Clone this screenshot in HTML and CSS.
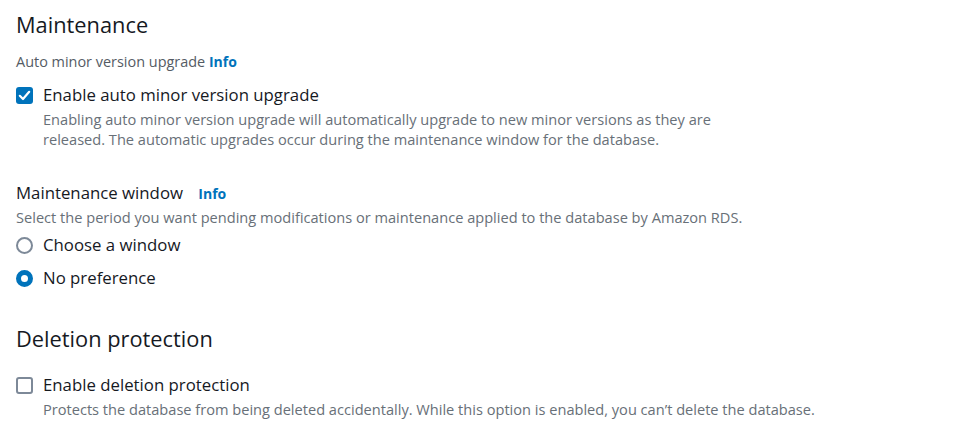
FILE: index.html
```html
<!DOCTYPE html>
<html>
<head>
<meta charset="utf-8">
<link rel="stylesheet" href="styles.css">
</head>
<body>
<div class="page">
  <section class="section">
    <h2 class="heading">Maintenance</h2>
    <div class="field-label">Auto minor version upgrade <a class="info">Info</a></div>
    <div class="option">
      <span class="checkbox checked">
        <svg viewBox="0 0 17 17" width="17" height="17"><rect x="0" y="0" width="17" height="17" rx="3" fill="#0073bb"/><path d="M3.8 8.8 L7 12 L13.2 4.8" fill="none" stroke="#fff" stroke-width="2.2" stroke-linecap="round" stroke-linejoin="round"/></svg>
      </span>
      <div class="option-body">
        <div class="option-label">Enable auto minor version upgrade</div>
        <div class="desc option-desc wrap">Enabling auto minor version upgrade will automatically upgrade to new minor versions as they are released. The automatic upgrades occur during the maintenance window for the database.</div>
      </div>
    </div>

    <div class="field-title">Maintenance window <a class="info info-gap">Info</a></div>
    <div class="desc field-desc">Select the period you want pending modifications or maintenance applied to the database by Amazon RDS.</div>
    <div class="radio-list">
      <div class="radio-row">
        <span class="radio"></span>
        <span class="option-label">Choose a window</span>
      </div>
      <div class="radio-row">
        <span class="radio checked"></span>
        <span class="option-label">No preference</span>
      </div>
    </div>
  </section>

  <section class="section second">
    <h2 class="heading">Deletion protection</h2>
    <div class="option">
      <span class="checkbox"></span>
      <div class="option-body">
        <div class="option-label">Enable deletion protection</div>
        <div class="desc option-desc">Protects the database from being deleted accidentally. While this option is enabled, you can’t delete the database.</div>
      </div>
    </div>
  </section>
</div>
</body>
</html>
```
FILE: styles.css
```css
html, body {
  margin: 0;
  padding: 0;
  background: #ffffff;
}
body {
  font-family: "Open Sans", "Noto Sans", sans-serif;
  color: #16191f;
}
.page {
  padding: 10px 16px 0 16px;
}
.heading {
  margin: 0;
  font-size: 21.8px;
  font-weight: 400;
  line-height: 30px;
  color: #16191f;
}
.field-label {
  margin-top: 12px;
  font-size: 14.45px;
  line-height: 20px;
  color: #545b64;
}
.info {
  color: #0073bb;
  font-weight: 700;
  font-size: 14px;
  text-decoration: none;
}
.info-gap {
  margin-left: 11px;
}
.option {
  display: flex;
  gap: 10px;
  margin-top: 12px;
}
.checkbox {
  flex: none;
  width: 17px;
  height: 17px;
  margin-top: 2.5px;
  box-sizing: border-box;
  border: 2px solid #7d8998;
  border-radius: 3px;
  display: block;
}
.checkbox.checked {
  border: none;
}
.checkbox svg { display: block; }
.option-label {
  font-size: 16.8px;
  line-height: 22px;
  color: #16191f;
}
.desc {
  font-size: 14.6px;
  line-height: 20px;
  color: #687078;
}
.option-desc {
  margin-top: 3px;
}
.wrap {
  max-width: 700px;
}
.field-title {
  margin-top: 33px;
  font-size: 16.8px;
  line-height: 22px;
}
.field-desc {
  margin-top: 2px;
}
.radio-list {
  display: flex;
  flex-direction: column;
  gap: 11px;
  margin-top: 7px;
}
.radio-row {
  display: flex;
  align-items: center;
  gap: 10px;
}
.radio {
  flex: none;
  width: 17px;
  height: 17px;
  box-sizing: border-box;
  border: 2px solid #7d8998;
  border-radius: 50%;
}
.radio.checked {
  border: 5px solid #0073bb;
}
.second {
  margin-top: 35px;
}
.second .option {
  margin-top: 20px;
}
```
